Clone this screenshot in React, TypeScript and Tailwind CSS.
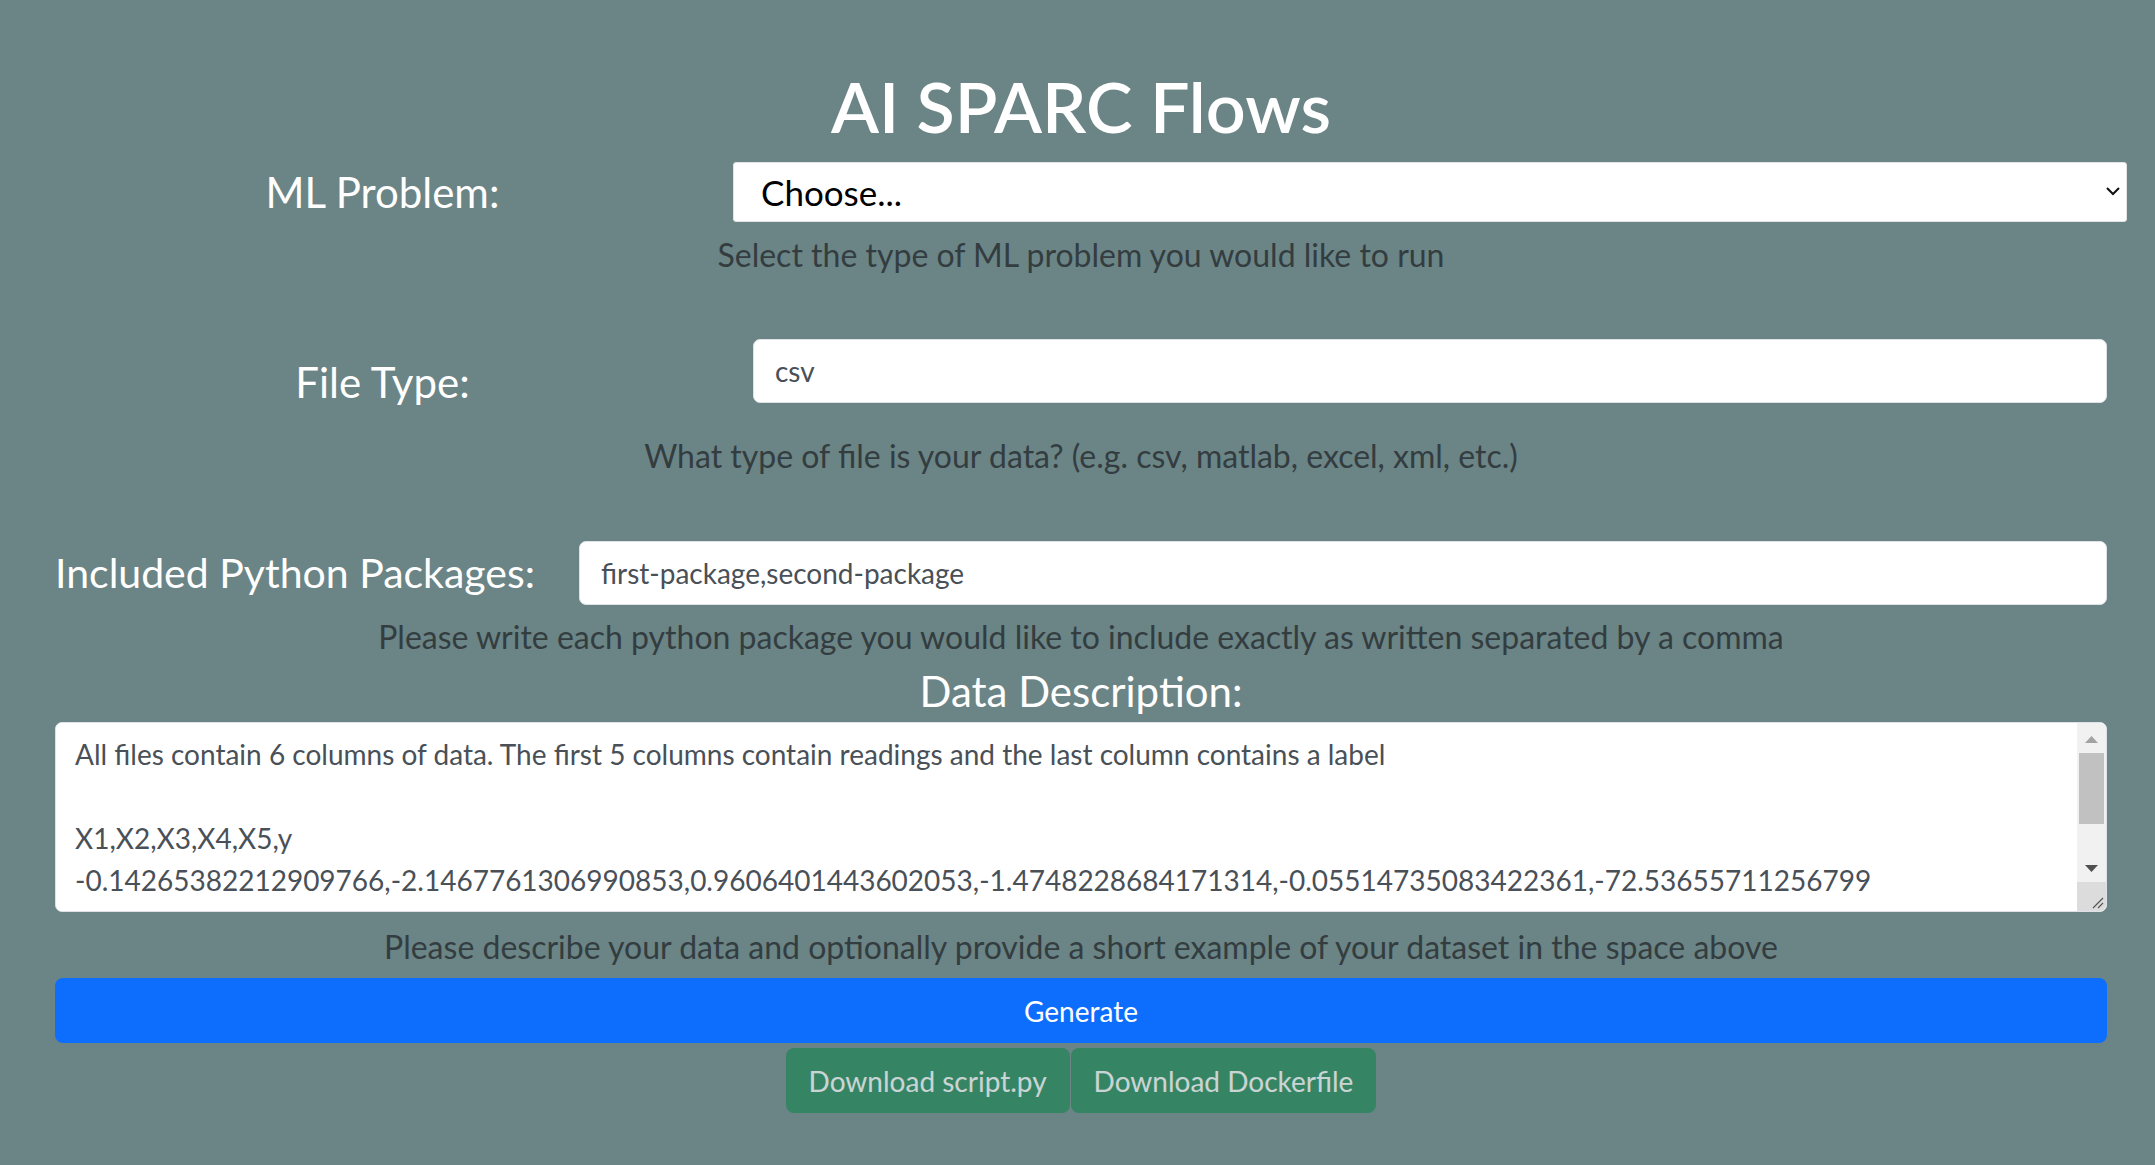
import React, { useState } from "react";

const dataDescription = [
  "All files contain 6 columns of data. The first 5 columns contain readings and the last column contains a label",
  "",
  "X1,X2,X3,X4,X5,y",
  "-0.14265382212909766,-2.1467761306990853,0.9606401443602053,-1.4748228684171314,-0.05514735083422361,-72.53655711256799",
  "1.0475033612431612,0.40233406722036826,-0.6853484262278549,0.30183289476580135,-0.8211232938520457,31.03925622404185",
  "-0.38043380468427846,0.5425447466389542,1.1128539281224935,-1.6221934154225244,0.21620040612658694,-48.24015087012263",
  "0.6287891416005022,-0.9542839567245126,-0.28430985622310445,0.8106440553268418,1.254209618207519,12.603517249211847",
].join("\n");

const ML_PROBLEMS = ["Choose...", "Classification", "Regression", "Clustering"];

const HelpText = ({ children, className = "" }: { children: React.ReactNode; className?: string }) => (
  <div className={`text-center text-[32px] leading-[45px] text-[#333d40] ${className}`}>{children}</div>
);

const App = () => {
  const [problem, setProblem] = useState("Choose...");
  const [fileType, setFileType] = useState("csv");
  const [packages, setPackages] = useState("first-package,second-package");
  const [description, setDescription] = useState(dataDescription);

  return (
    <div className="min-h-screen overflow-hidden bg-[#6b8486] font-['Lato',sans-serif] pl-[55px] pr-[48px]">
      <h1 className="pt-[64px] text-center text-[70px] leading-[84px] font-semibold text-white">
        AI SPARC Flows
      </h1>

      {/* ML problem */}
      <div className="mt-[14px] flex items-center">
        <label className="w-[655px] text-center text-[42px] leading-[50px] text-white">ML Problem:</label>
        <div className="relative ml-[23px] mr-[-20px] flex-1">
          <select
            value={problem}
            onChange={(e) => setProblem(e.target.value)}
            className="h-[60px] w-full appearance-none rounded-[3px] border border-[#e3e3e3] bg-white pl-[27px] text-[35px] text-black outline-none"
          >
            {ML_PROBLEMS.map((p) => (
              <option key={p}>{p}</option>
            ))}
          </select>
          <svg
            className="pointer-events-none absolute right-[7px] top-[25px]"
            width="14"
            height="9"
            viewBox="0 0 14 9"
            fill="none"
            stroke="#111"
            strokeWidth="2"
          >
            <path d="M1 1l6 6 6-6" />
          </svg>
        </div>
      </div>
      <HelpText className="mt-[10px]">Select the type of ML problem you would like to run</HelpText>

      {/* file type */}
      <div className="mt-[62px] flex h-[64px] items-start">
        <label className="mt-[18px] w-[655px] text-center text-[42px] leading-[50px] text-white">File Type:</label>
        <input
          value={fileType}
          onChange={(e) => setFileType(e.target.value)}
          className="ml-[43px] h-[64px] flex-1 rounded-[7px] border border-[#dee2e6] bg-white px-[21px] text-[28px] text-[#495057] outline-none"
        />
      </div>
      <HelpText className="mt-[30px]">What type of file is your data? (e.g. csv, matlab, excel, xml, etc.)</HelpText>

      {/* packages */}
      <div className="mt-[63px] flex items-center">
        <label className="w-[480px] whitespace-nowrap text-[41px] leading-[50px] text-white">
          Included Python Packages:
        </label>
        <input
          value={packages}
          onChange={(e) => setPackages(e.target.value)}
          className="ml-[44px] h-[64px] flex-1 rounded-[7px] border border-[#dee2e6] bg-white px-[21px] text-[28px] text-[#495057] outline-none"
        />
      </div>
      <HelpText className="mt-[9px]">
        Please write each python package you would like to include exactly as written separated by a comma
      </HelpText>

      {/* data description */}
      <div className="mt-[7px] text-center text-[42px] leading-[50px] text-white">Data Description:</div>
      <div className="relative mt-[6px] h-[190px] overflow-hidden rounded-[7px] border border-[#dee2e6] bg-white">
        <textarea
          value={description}
          onChange={(e) => setDescription(e.target.value)}
          className="block h-full w-full resize-none overflow-hidden whitespace-pre bg-white pl-[19px] pr-[40px] pt-[10px] text-[28px] leading-[42px] text-[#495057] outline-none"
        />
        {/* scrollbar */}
        <div className="absolute right-0 top-0 flex h-[161px] w-[29px] flex-col items-center bg-[#f1f1f1]">
          <svg className="mt-[13px]" width="13" height="7" viewBox="0 0 13 7">
            <path d="M6.5 0L13 7H0z" fill="#a3a3a3" />
          </svg>
          <div className="mt-[10px] h-[71px] w-[25px] bg-[#c1c1c1]" />
          <svg className="mt-[41px]" width="13" height="7" viewBox="0 0 13 7">
            <path d="M0 0h13L6.5 7z" fill="#505050" />
          </svg>
        </div>
        <div className="absolute bottom-0 right-0 h-[29px] w-[29px] bg-[#dcdcdc]">
          <svg className="absolute bottom-[2px] right-[2px]" width="14" height="14" viewBox="0 0 14 14" stroke="#555" strokeWidth="1.2">
            <path d="M3 13L13 3M8 13l5-5" />
          </svg>
        </div>
      </div>
      <HelpText className="mt-[12px]">
        Please describe your data and optionally provide a short example of your dataset in the space above
      </HelpText>

      <button
        type="button"
        className="mt-[9px] h-[65px] w-full rounded-[8px] bg-[#0d6efd] text-[28px] text-white"
      >
        Generate
      </button>

      <div className="mt-[5px] flex justify-center gap-[1px]">
        <button
          type="button"
          className="h-[65px] rounded-[8px] bg-[#198754] px-[23px] text-[28px] text-white opacity-65"
        >
          Download script.py
        </button>
        <button
          type="button"
          className="h-[65px] rounded-[8px] bg-[#198754] px-[23px] text-[28px] text-white opacity-65"
        >
          Download Dockerfile
        </button>
      </div>
    </div>
  );
};

export default App;
